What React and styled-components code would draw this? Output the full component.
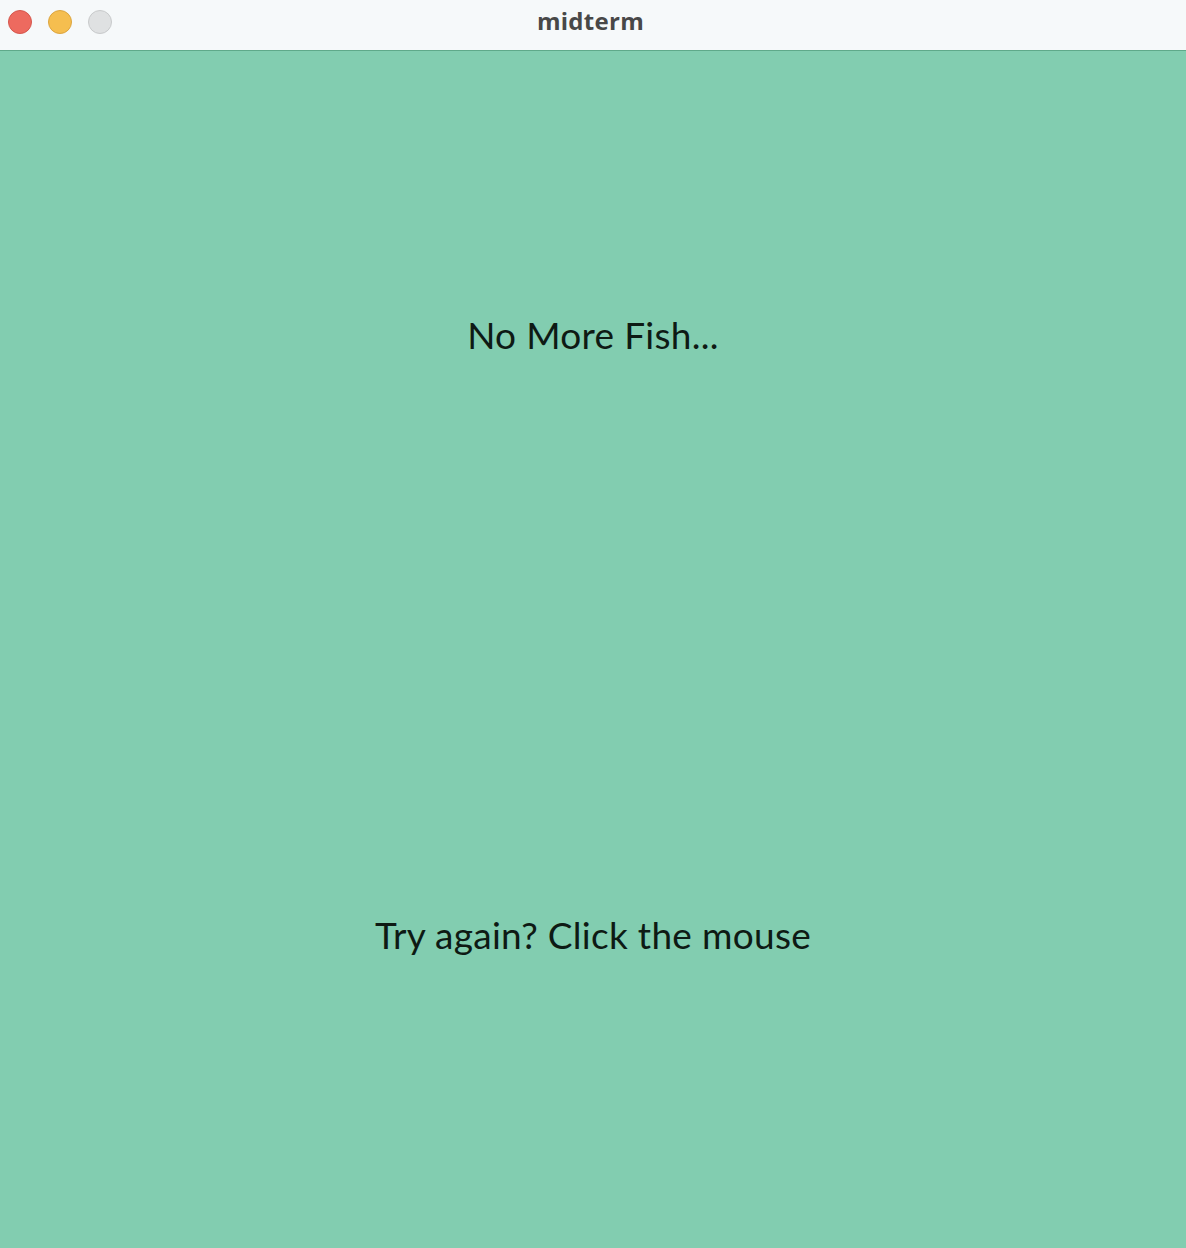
import React from 'react'
import styled, { createGlobalStyle } from 'styled-components'

const Global = createGlobalStyle`
  html, body {
    margin: 0;
    padding: 0;
    background: #82cdb0;
  }
`

const Window = styled.div`
  width: 1186px;
  height: 1248px;
  display: flex;
  flex-direction: column;
  overflow: hidden;
`

const TitleBar = styled.div`
  height: 50px;
  flex: none;
  background: #f6f9fa;
  border-bottom: 1px solid #5fa98a;
  display: flex;
  align-items: center;
  position: relative;
  padding-left: 8px;
  gap: 16px;
`

const Light = styled.span`
  width: 24px;
  height: 24px;
  border-radius: 50%;
  background: ${p => p.color};
  border: 1px solid ${p => p.edge};
  box-sizing: border-box;
  margin-top: -7px;
`

const Title = styled.div`
  position: absolute;
  left: 0;
  right: 5px;
  top: 4px;
  text-align: center;
  font-family: 'Open Sans', 'Liberation Sans', sans-serif;
  font-weight: 700;
  font-size: 24px;
  letter-spacing: 0.3px;
  color: #484848;
  pointer-events: none;
`

const Canvas = styled.div`
  flex: 1;
  background: #82cdb0;
  display: flex;
  flex-direction: column;
  align-items: center;
  padding-top: 260px;
  gap: 552px;
`

const Message = styled.div`
  font-family: Lato, 'Noto Sans', sans-serif;
  font-size: 37px;
  line-height: 48px;
  letter-spacing: 0.3px;
  color: #0e1a14;
`

export default function App() {
  return (
    <>
      <Global />
      <Window>
        <TitleBar>
          <Light color="#ed6a5f" edge="#d5574d" />
          <Light color="#f5be4f" edge="#dca53f" />
          <Light color="#dfe1e2" edge="#c8cacb" />
          <Title>midterm</Title>
        </TitleBar>
        <Canvas>
          <Message>No More Fish...</Message>
          <Message>Try again? Click the mouse</Message>
        </Canvas>
      </Window>
    </>
  )
}
